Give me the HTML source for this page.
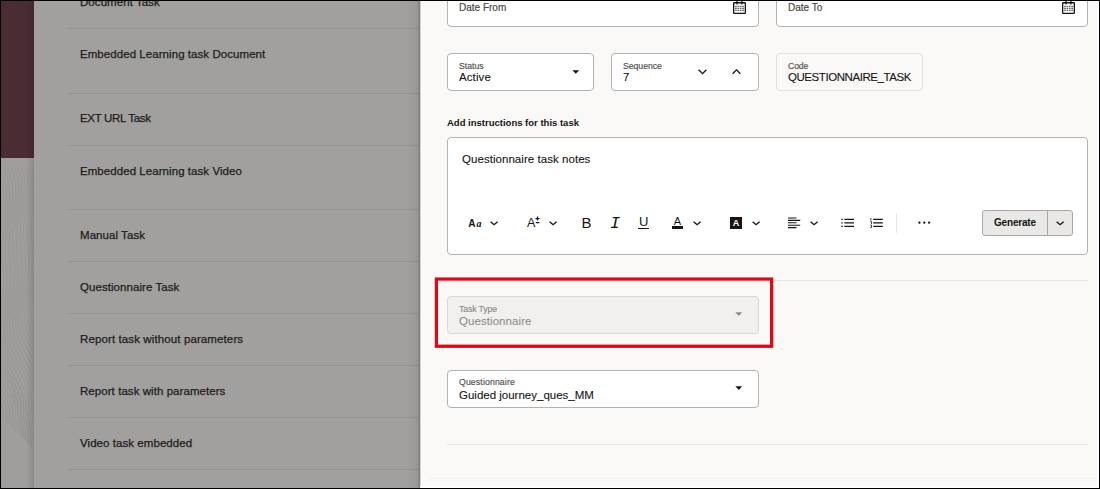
<!DOCTYPE html>
<html lang="en">
<head>
<meta charset="utf-8">
<title>Task Details</title>
<style>
*{box-sizing:border-box;margin:0;padding:0}
html,body{width:1100px;height:489px;overflow:hidden;background:#000}
body{position:relative;font-family:"Liberation Sans",sans-serif;color:#161513;font-size:12px}
.abs{position:absolute}
#frame{left:1px;top:1px;width:1098px;height:487px;background:#fff;overflow:hidden}
/* left strip */
#maroon{left:0;top:0;width:33px;height:157px;background:#4a2c33}
#strip{left:0;top:157px;width:33px;height:330px;background:#9f9e9c;overflow:hidden}
#stripshade{left:25px;top:0;width:8px;height:487px;background:linear-gradient(90deg,rgba(0,0,0,0),rgba(0,0,0,.12))}
/* list panel */
#list{left:33px;top:0;width:386px;height:487px;background:#a1a09e}
#listshade{left:404px;top:0;width:15px;height:487px;background:linear-gradient(90deg,rgba(40,38,36,0) 0,rgba(40,38,36,.03) 50%,rgba(40,38,36,.07) 80%,rgba(40,38,36,.16) 90%,rgba(40,38,36,.30) 100%)}
.sep{position:absolute;left:67px;width:352px;height:1px;background:#969593}
.item{position:absolute;left:79px;font-size:11.5px;letter-spacing:.06px;line-height:14px;white-space:nowrap;color:#1d1c1a;-webkit-text-stroke:.25px #1d1c1a}
/* drawer */
#drawer{left:419px;top:0;width:677px;height:485px;background:#faf9f8;border-left:1px solid #cfcecd;box-shadow:inset 1px 0 0 #fff}
.field{position:absolute;background:#fff;border:1px solid #b3b2b0;border-radius:4px}
.field.ro{background:#faf9f8;border-color:#e2e1df}
.field.dis{background:#f1f0ee;border-color:#d9d8d6}
.lab{position:absolute;left:11px;font-size:8.7px;line-height:10px;color:#504e4b;white-space:nowrap;letter-spacing:0;-webkit-text-stroke:.15px currentColor}
.val{position:absolute;left:11px;font-size:11.5px;line-height:14px;white-space:nowrap;letter-spacing:0;-webkit-text-stroke:.1px currentColor}
.hline{position:absolute;height:1px;background:#e7e6e4}
svg{position:absolute;overflow:visible}
</style>
</head>
<body>
<div id="frame" class="abs">

  <!-- left navigation strip -->
  <div id="maroon" class="abs"></div>
  <div id="strip" class="abs"><svg style="left:0;top:0;clip-path:polygon(0 0,33px 0,33px 292px,0 258px)" width="33" height="330" viewBox="0 0 33 330"><path d="M-13.5 10 L-10.8 16 L-8.2 22 L-6.1 28 L-4.6 34 L-3.9 40 L-4.0 46 L-4.9 52 L-6.6 58 L-8.8 64 L-11.3 70 L-14.0 76 L-16.5 82 L-18.6 88 L-20.3 94 L-21.3 100 L-21.8 106 L-21.6 112 L-21.1 118 L-20.3 124 L-19.3 130 L-18.5 136 L-18.0 142 L-17.8 148 L-18.0 154 L-18.6 160 L-19.4 166 L-20.4 172 L-21.3 178 L-21.9 184 L-22.0 190 L-21.5 196 L-20.4 202 L-18.5 208 L-16.0 214 L-13.1 220 L-9.8 226 L-6.5 232 L-3.4 238 L-0.7 244 L1.3 250 L2.6 256 L3.0 262 L2.7 268 L1.7 274 L0.2 280 L-1.6 286 L-3.5 292 L-5.3 298 M-9.6 10 L-6.8 16 L-4.3 22 L-2.4 28 L-1.1 34 L-0.6 40 L-1.0 46 L-2.2 52 L-4.0 58 L-6.3 64 L-8.9 70 L-11.4 76 L-13.8 82 L-15.7 88 L-17.1 94 L-17.9 100 L-18.1 106 L-17.8 112 L-17.1 118 L-16.3 124 L-15.5 130 L-14.9 136 L-14.6 142 L-14.6 148 L-15.1 154 L-15.9 160 L-16.9 166 L-17.9 172 L-18.8 178 L-19.3 184 L-19.2 190 L-18.5 196 L-17.1 202 L-15.0 208 L-12.3 214 L-9.2 220 L-5.9 226 L-2.6 232 L0.4 238 L2.9 244 L4.7 250 L5.7 256 L5.9 262 L5.4 268 L4.3 274 L2.7 280 L0.9 286 L-0.9 292 L-2.5 298 M-5.7 10 L-2.9 16 L-0.5 22 L1.3 28 L2.3 34 L2.5 40 L1.9 46 L0.5 52 L-1.5 58 L-3.9 64 L-6.4 70 L-8.8 76 L-11.0 82 L-12.7 88 L-13.8 94 L-14.3 100 L-14.3 106 L-13.9 112 L-13.2 118 L-12.4 124 L-11.7 130 L-11.3 136 L-11.2 142 L-11.6 148 L-12.3 154 L-13.3 160 L-14.4 166 L-15.5 172 L-16.3 178 L-16.7 184 L-16.4 190 L-15.4 196 L-13.8 202 L-11.4 208 L-8.5 214 L-5.3 220 L-1.9 226 L1.3 232 L4.2 238 L6.4 244 L8.0 250 L8.7 256 L8.7 262 L8.0 268 L6.7 274 L5.1 280 L3.4 286 L1.8 292 L0.4 298 M-1.7 10 L1.0 16 L3.2 22 L4.8 28 L5.6 34 L5.5 40 L4.6 46 L3.1 52 L1.0 58 L-1.4 64 L-3.9 70 L-6.2 76 L-8.1 82 L-9.5 88 L-10.4 94 L-10.7 100 L-10.5 106 L-10.0 112 L-9.2 118 L-8.5 124 L-8.0 130 L-7.8 136 L-8.0 142 L-8.6 148 L-9.6 154 L-10.7 160 L-11.9 166 L-13.0 172 L-13.7 178 L-13.9 184 L-13.5 190 L-12.2 196 L-10.3 202 L-7.7 208 L-4.7 214 L-1.3 220 L2.0 226 L5.2 232 L7.8 238 L9.9 244 L11.1 250 L11.6 256 L11.4 262 L10.5 268 L9.2 274 L7.6 280 L6.0 286 L4.5 292 L3.4 298 M2.2 10 L4.8 16 L6.9 22 L8.2 28 L8.7 34 L8.4 40 L7.3 46 L5.6 52 L3.4 58 L1.1 64 L-1.3 70 L-3.4 76 L-5.1 82 L-6.2 88 L-6.8 94 L-6.9 100 L-6.6 106 L-6.0 112 L-5.3 118 L-4.7 124 L-4.4 130 L-4.4 136 L-4.9 142 L-5.8 148 L-6.9 154 L-8.2 160 L-9.5 166 L-10.5 172 L-11.1 178 L-11.1 184 L-10.4 190 L-8.9 196 L-6.7 202 L-3.9 208 L-0.7 214 L2.6 220 L5.9 226 L8.9 232 L11.4 238 L13.2 244 L14.2 250 L14.4 256 L14.0 262 L13.0 268 L11.6 274 L10.1 280 L8.6 286 L7.4 292 L6.5 298 M6.1 10 L8.6 16 L10.4 22 L11.5 28 L11.8 34 L11.2 40 L9.9 46 L8.1 52 L5.9 58 L3.6 64 L1.4 70 L-0.5 76 L-2.0 82 L-2.9 88 L-3.2 94 L-3.1 100 L-2.7 106 L-2.1 112 L-1.4 118 L-1.0 124 L-0.9 130 L-1.2 136 L-1.9 142 L-3.0 148 L-4.3 154 L-5.7 160 L-7.0 166 L-8.0 172 L-8.4 178 L-8.2 184 L-7.2 190 L-5.5 196 L-3.1 202 L-0.1 208 L3.2 214 L6.6 220 L9.8 226 L12.6 232 L14.9 238 L16.4 244 L17.1 250 L17.2 256 L16.6 262 L15.5 268 L14.1 274 L12.7 280 L11.4 286 L10.4 292 L9.7 298 M10.0 10 L12.3 16 L13.9 22 L14.7 28 L14.7 34 L13.9 40 L12.5 46 L10.5 52 L8.3 58 L6.1 64 L4.1 70 L2.4 76 L1.3 82 L0.6 88 L0.5 94 L0.7 100 L1.3 106 L1.9 112 L2.4 118 L2.6 124 L2.5 130 L2.0 136 L1.0 142 L-0.3 148 L-1.8 154 L-3.3 160 L-4.6 166 L-5.4 172 L-5.7 178 L-5.2 184 L-3.9 190 L-2.0 196 L0.7 202 L3.8 208 L7.1 214 L10.5 220 L13.6 226 L16.2 232 L18.2 238 L19.5 244 L20.0 250 L19.8 256 L19.1 262 L17.9 268 L16.6 274 L15.3 280 L14.2 286 L13.4 292 L13.1 298 M13.8 10 L15.9 16 L17.2 22 L17.8 28 L17.5 34 L16.6 40 L15.0 46 L13.0 52 L10.8 58 L8.8 64 L6.9 70 L5.5 76 L4.6 82 L4.2 88 L4.3 94 L4.7 100 L5.2 106 L5.8 112 L6.1 118 L6.2 124 L5.8 130 L5.0 136 L3.8 142 L2.3 148 L0.7 154 L-0.8 160 L-2.0 166 L-2.8 172 L-2.8 178 L-2.1 184 L-0.6 190 L1.7 196 L4.5 202 L7.7 208 L11.1 214 L14.4 220 L17.3 226 L19.7 232 L21.5 238 L22.5 244 L22.7 250 L22.4 256 L21.5 262 L20.4 268 L19.1 274 L18.0 280 L17.1 286 L16.6 292 L16.5 298 M17.5 10 L19.4 16 L20.5 22 L20.8 28 L20.3 34 L19.1 40 L17.4 46 L15.4 52 L13.4 58 L11.5 64 L9.9 70 L8.7 76 L8.1 82 L7.9 88 L8.1 94 L8.6 100 L9.1 106 L9.6 112 L9.8 118 L9.6 124 L9.0 130 L7.9 136 L6.5 142 L4.8 148 L3.1 154 L1.6 160 L0.5 166 L-0.0 172 L0.2 178 L1.2 184 L2.9 190 L5.4 196 L8.4 202 L11.7 208 L15.0 214 L18.2 220 L20.9 226 L23.1 232 L24.6 238 L25.3 244 L25.4 250 L24.9 256 L24.0 262 L22.9 268 L21.7 274 L20.8 280 L20.1 286 L19.9 292 L20.1 298 M21.1 10 L22.8 16 L23.6 22 L23.7 28 L23.0 34 L21.6 40 L19.9 46 L17.9 52 L16.0 58 L14.3 64 L12.9 70 L12.0 76 L11.6 82 L11.6 88 L12.0 94 L12.5 100 L13.1 106 L13.4 112 L13.4 118 L13.0 124 L12.1 130 L10.7 136 L9.1 142 L7.3 148 L5.6 154 L4.1 160 L3.2 166 L2.8 172 L3.3 178 L4.5 184 L6.5 190 L9.2 196 L12.3 202 L15.6 208 L18.9 214 L21.9 220 L24.5 226 L26.4 232 L27.6 238 L28.1 244 L28.0 250 L27.4 256 L26.4 262 L25.4 268 L24.4 274 L23.7 280 L23.3 286 L23.3 292 L23.7 298 M24.6 10 L26.0 16 L26.6 22 L26.4 28 L25.5 34 L24.1 40 L22.3 46 L20.4 52 L18.7 58 L17.1 64 L16.0 70 L15.4 76 L15.3 82 L15.5 88 L15.9 94 L16.5 100 L16.9 106 L17.1 112 L16.9 118 L16.2 124 L15.0 130 L13.5 136 L11.7 142 L9.8 148 L8.0 154 L6.7 160 L5.9 166 L5.8 172 L6.5 178 L8.0 184 L10.2 190 L13.0 196 L16.2 202 L19.5 208 L22.7 214 L25.6 220 L27.9 226 L29.6 232 L30.5 238 L30.8 244 L30.5 250 L29.8 256 L28.9 262 L27.9 268 L27.1 274 L26.6 280 L26.5 286 L26.8 292 L27.4 298 M28.1 10 L29.2 16 L29.5 22 L29.1 28 L28.1 34 L26.6 40 L24.8 46 L23.0 52 L21.4 58 L20.1 64 L19.3 70 L18.9 76 L19.0 82 L19.3 88 L19.9 94 L20.4 100 L20.7 106 L20.7 112 L20.3 118 L19.3 124 L17.9 130 L16.1 136 L14.2 142 L12.2 148 L10.5 154 L9.3 160 L8.7 166 L8.8 172 L9.8 178 L11.5 184 L14.0 190 L16.9 196 L20.2 202 L23.4 208 L26.5 214 L29.2 220 L31.2 226 L32.6 232 L33.4 238 L33.4 244 L33.0 250 L32.3 256 L31.4 262 L30.6 268 L30.0 274 L29.7 280 L29.9 286 L30.4 292 L31.2 298 M31.4 10 L32.3 16 L32.3 22 L31.7 28 L30.6 34 L29.0 40 L27.3 46 L25.7 52 L24.3 58 L23.3 64 L22.7 70 L22.5 76 L22.8 82 L23.3 88 L23.8 94 L24.3 100 L24.5 106 L24.2 112 L23.5 118 L22.3 124 L20.7 130 L18.7 136 L16.7 142 L14.7 148 L13.1 154 L12.0 160 L11.6 166 L12.0 172 L13.2 178 L15.2 184 L17.8 190 L20.9 196 L24.1 202 L27.3 208 L30.2 214 L32.6 220 L34.5 226 L35.6 232 L36.1 238 L36.0 244 L35.5 250 L34.7 256 L34.0 262 L33.3 268 L33.0 274 L33.0 280 L33.4 286 L34.1 292 L35.1 298 M34.6 10 L35.2 16 L35.1 22 L34.3 28 L33.0 34 L31.5 40 L29.9 46 L28.4 52 L27.2 58 L26.5 64 L26.2 70 L26.2 76 L26.6 82 L27.2 88 L27.8 94 L28.1 100 L28.1 106 L27.7 112 L26.7 118 L25.2 124 L23.3 130 L21.2 136 L19.1 142 L17.2 148 L15.6 154 L14.7 160 L14.6 166 L15.3 172 L16.7 178 L18.9 184 L21.7 190 L24.8 196 L28.0 202 L31.1 208 L33.8 214 L36.0 220 L37.6 226 L38.4 232 L38.7 238 L38.5 244 L37.9 250 L37.2 256 L36.6 262 L36.1 268 L36.0 274 L36.3 280 L36.9 286 L37.9 292 L39.0 298 M37.7 10 L38.0 16 L37.7 22 L36.8 28 L35.5 34 L34.0 40 L32.5 46 L31.2 52 L30.3 58 L29.8 64 L29.7 70 L30.0 76 L30.6 82 L31.2 88 L31.7 94 L31.9 100 L31.7 106 L31.0 112 L29.7 118 L28.0 124 L25.9 130 L23.7 136 L21.6 142 L19.7 148 L18.3 154 L17.6 160 L17.7 166 L18.6 172 L20.4 178 L22.7 184 L25.6 190 L28.8 196 L31.9 202 L34.8 208 L37.3 214 L39.3 220 L40.5 226 L41.2 232 L41.3 238 L41.0 244 L40.4 250 L39.8 256 L39.3 262 L39.0 268 L39.2 274 L39.7 280 L40.6 286 L41.7 292 L42.9 298 M40.7 10 L40.8 16 L40.3 22 L39.3 28 L37.9 34 L36.5 40 L35.2 46 L34.1 52 L33.5 58 L33.2 64 L33.4 70 L33.9 76 L34.5 82 L35.1 88 L35.5 94 L35.6 100 L35.1 106 L34.1 112 L32.7 118 L30.7 124 L28.5 130 L26.2 136 L24.0 142 L22.2 148 L21.0 154 L20.6 160 L20.9 166 L22.1 172 L24.1 178 L26.6 184 L29.6 190 L32.7 196 L35.7 202 L38.5 208 L40.7 214 L42.4 220 L43.4 226 L43.9 232 L43.8 238 L43.4 244 L42.9 250 L42.4 256 L42.0 262 L42.1 268 L42.5 274 L43.3 280 L44.3 286 L45.6 292 L46.9 298 M43.5 10 L43.5 16 L42.8 22 L41.7 28 L40.4 34 L39.1 40 L38.0 46 L37.2 52 L36.8 58 L36.8 64 L37.2 70 L37.8 76 L38.4 82 L39.0 88 L39.3 94 L39.1 100 L38.5 106 L37.2 112 L35.5 118 L33.3 124 L31.0 130 L28.6 136 L26.5 142 L24.9 148 L23.9 154 L23.7 160 L24.3 166 L25.7 172 L27.9 178 L30.5 184 L33.5 190 L36.6 196 L39.5 202 L42.0 208 L44.0 214 L45.4 220 L46.2 226 L46.5 232 L46.3 238 L45.9 244 L45.4 250 L45.0 256 L44.9 262 L45.2 268 L45.9 274 L46.9 280 L48.2 286 L49.5 292 L50.8 298 M46.3 10 L46.0 16 L45.3 22 L44.2 28 L42.9 34 L41.8 40 L40.9 46 L40.3 52 L40.2 58 L40.4 64 L41.0 70 L41.7 76 L42.4 82 L42.9 88 L43.0 94 L42.6 100 L41.7 106 L40.2 112 L38.2 118 L35.9 124 L33.5 130 L31.1 136 L29.1 142 L27.6 148 L26.8 154 L26.9 160 L27.7 166 L29.4 172 L31.7 178 L34.5 184 L37.5 190 L40.4 196 L43.2 202 L45.5 208 L47.2 214 L48.3 220 L48.9 226 L49.0 232 L48.8 238 L48.3 244 L48.0 250 L47.8 256 L47.9 262 L48.4 268 L49.4 274 L50.6 280 L52.0 286 L53.5 292 L54.7 298 M49.0 10 L48.6 16 L47.7 22 L46.6 28 L45.5 34 L44.5 40 L43.9 46 L43.6 52 L43.7 58 L44.2 64 L44.9 70 L45.6 76 L46.3 82 L46.7 88 L46.6 94 L46.0 100 L44.8 106 L43.1 112 L40.9 118 L38.4 124 L35.9 130 L33.6 136 L31.7 142 L30.4 148 L29.9 154 L30.2 160 L31.3 166 L33.2 172 L35.6 178 L38.4 184 L41.4 190 L44.2 196 L46.7 202 L48.8 208 L50.3 214 L51.2 220 L51.5 226 L51.5 232 L51.2 238 L50.8 244 L50.6 250 L50.6 256 L51.0 262 L51.8 268 L53.0 274 L54.4 280 L56.0 286 L57.4 292 L58.6 298 M51.6 10 L51.1 16 L50.2 22 L49.1 28 L48.1 34 L47.4 40 L47.0 46 L46.9 52 L47.3 58 L48.0 64 L48.8 70 L49.6 76 L50.2 82 L50.4 88 L50.2 94 L49.3 100 L47.8 106 L45.8 112 L43.5 118 L40.9 124 L38.4 130 L36.1 136 L34.3 142 L33.3 148 L33.0 154 L33.6 160 L34.9 166 L37.0 172 L39.5 178 L42.4 184 L45.2 190 L47.9 196 L50.2 202 L52.0 208 L53.2 214 L53.9 220 L54.1 226 L54.0 232 L53.7 238 L53.4 244 L53.3 250 L53.6 256 L54.2 262 L55.3 268 L56.7 274 L58.3 280 L59.9 286 L61.4 292 L62.5 298 M12.2 243.4 C17.0 243.4 19.0 268.0 22.4 284.0 M10.4 236.8 C20.0 236.8 22.0 274.0 24.8 293.0 M8.6 230.2 C23.0 230.2 25.0 280.0 27.2 302.0 M6.8 223.6 C26.0 223.6 28.0 286.0 29.6 311.0 M5.0 217.0 C29.0 217.0 31.0 292.0 32.0 320.0" fill="none" stroke="#000" stroke-opacity=".055" stroke-width=".8"/></svg></div>
  <div id="stripshade" class="abs"></div>

  <!-- task list (under scrim) -->
  <div id="list" class="abs"></div>
  <div class="sep" style="top:27px"></div>
  <div class="sep" style="top:92px"></div>
  <div class="sep" style="top:144px"></div>
  <div class="sep" style="top:208px"></div>
  <div class="sep" style="top:260px"></div>
  <div class="sep" style="top:312px"></div>
  <div class="sep" style="top:364px"></div>
  <div class="sep" style="top:416px"></div>
  <div class="sep" style="top:468px"></div>
  <div class="item" style="top:-6px">Document Task</div>
  <div class="item" style="top:46px">Embedded Learning task Document</div>
  <div class="item" style="top:110px;letter-spacing:-.32px">EXT URL Task</div>
  <div class="item" style="top:163px">Embedded Learning task Video</div>
  <div class="item" style="top:227px">Manual Task</div>
  <div class="item" style="top:279px">Questionnaire Task</div>
  <div class="item" style="top:331px;letter-spacing:.113px">Report task without parameters</div>
  <div class="item" style="top:383px">Report task with parameters</div>
  <div class="item" style="top:435px">Video task embedded</div>
  <div id="listshade" class="abs"></div>

  <!-- drawer -->
  <div id="drawer" class="abs"></div>

  <!-- Date From (frame coords = page coords - 1) -->
  <div class="field" style="left:446px;top:-10px;width:312px;height:36px">
    <div class="val" style="top:9px;font-size:10px;color:#4b4946;letter-spacing:0;-webkit-text-stroke:.2px #4b4946">Date From</div>
    <svg style="left:284.9px;top:8px" width="14" height="15" viewBox="0 0 14 15"><rect x="0.65" y="2.75" width="11.7" height="10.6" rx=".6" fill="none" stroke="#161513" stroke-width="1.3"/><path d="M4 0v4.6M8.9 0v4.6" stroke="#161513" stroke-width="1.3" fill="none"/><g fill="#6a6866"><rect x="2.10" y="5.80" width="1.7" height="1.3"/><rect x="4.50" y="5.80" width="1.7" height="1.3"/><rect x="6.90" y="5.80" width="1.7" height="1.3"/><rect x="9.30" y="5.80" width="1.7" height="1.3"/><rect x="2.10" y="7.75" width="1.7" height="1.3"/><rect x="4.50" y="7.75" width="1.7" height="1.3"/><rect x="6.90" y="7.75" width="1.7" height="1.3"/><rect x="9.30" y="7.75" width="1.7" height="1.3"/><rect x="2.10" y="9.70" width="1.7" height="1.3"/><rect x="4.50" y="9.70" width="1.7" height="1.3"/><rect x="6.90" y="9.70" width="1.7" height="1.3"/><rect x="9.30" y="9.70" width="1.7" height="1.3"/></g></svg>
  </div>
  <!-- Date To -->
  <div class="field" style="left:775px;top:-10px;width:312px;height:36px">
    <div class="val" style="top:9px;font-size:10px;color:#4b4946;letter-spacing:0;-webkit-text-stroke:.2px #4b4946">Date To</div>
    <svg style="left:284.9px;top:8px" width="14" height="15" viewBox="0 0 14 15"><rect x="0.65" y="2.75" width="11.7" height="10.6" rx=".6" fill="none" stroke="#161513" stroke-width="1.3"/><path d="M4 0v4.6M8.9 0v4.6" stroke="#161513" stroke-width="1.3" fill="none"/><g fill="#6a6866"><rect x="2.10" y="5.80" width="1.7" height="1.3"/><rect x="4.50" y="5.80" width="1.7" height="1.3"/><rect x="6.90" y="5.80" width="1.7" height="1.3"/><rect x="9.30" y="5.80" width="1.7" height="1.3"/><rect x="2.10" y="7.75" width="1.7" height="1.3"/><rect x="4.50" y="7.75" width="1.7" height="1.3"/><rect x="6.90" y="7.75" width="1.7" height="1.3"/><rect x="9.30" y="7.75" width="1.7" height="1.3"/><rect x="2.10" y="9.70" width="1.7" height="1.3"/><rect x="4.50" y="9.70" width="1.7" height="1.3"/><rect x="6.90" y="9.70" width="1.7" height="1.3"/><rect x="9.30" y="9.70" width="1.7" height="1.3"/></g></svg>
  </div>

  <!-- Status -->
  <div class="field" style="left:446px;top:52px;width:147px;height:38px">
    <div class="lab" style="top:7px">Status</div>
    <div class="val" style="top:16px;letter-spacing:.1px">Active</div>
    <svg style="left:123.5px;top:15.6px" width="8" height="5" viewBox="0 0 8 5"><path d="M0.4 0.3h6.8L3.8 3.8z" fill="#161513"/></svg>
  </div>
  <!-- Sequence -->
  <div class="field" style="left:610px;top:52px;width:148px;height:38px">
    <div class="lab" style="top:7px;letter-spacing:-.03px">Sequence</div>
    <div class="val" style="top:16px">7</div>
    <svg style="left:86.06px;top:14.56px" width="9" height="6" viewBox="0 0 9 6"><path d="M0.6 0.7L4.5 4.6L8.4 0.7" fill="none" stroke="#161513" stroke-width="1.3"/></svg>
    <svg style="left:120.16px;top:14.8px" width="9" height="6" viewBox="0 0 9 6"><path d="M0.6 4.8L4.5 0.9L8.4 4.8" fill="none" stroke="#161513" stroke-width="1.3"/></svg>
  </div>
  <!-- Code -->
  <div class="field ro" style="left:775px;top:52px;width:147px;height:38px">
    <div class="lab" style="top:7px;letter-spacing:-.12px">Code</div>
    <div class="val" style="top:16px;letter-spacing:-.44px">QUESTIONNAIRE_TASK</div>
  </div>

  <div class="abs" style="left:446px;top:116px;font-size:9.5px;font-weight:700;line-height:12px;letter-spacing:0;white-space:nowrap">Add instructions for this task</div>

  <!-- rich text editor -->
  <div id="editor" class="field" style="left:446px;top:136px;width:641px;height:118px">
    <div class="val" style="left:14px;top:14px;letter-spacing:.05px">Questionnaire task notes</div>
  </div>
  <!-- toolbar (frame coords) -->
  <div id="tb" class="abs" style="left:0;top:0;width:0;height:0">
    <!-- Aa -->
    <div class="abs" style="left:467.3px;top:217px;font-size:10px;font-weight:700;line-height:12px;letter-spacing:0">A</div>
    <div class="abs" style="left:475.5px;top:217px;font-family:'Liberation Serif',serif;font-style:italic;font-weight:700;font-size:10px;line-height:12px">a</div>
    <svg style="left:489.4px;top:219.5px" width="9" height="6" viewBox="0 0 9 6"><path d="M0.6 0.7L4.1 3.7L7.6 0.7" fill="none" stroke="#161513" stroke-width="1.4"/></svg>
    <!-- A± -->
    <div class="abs" style="left:526px;top:215.4px;font-size:12.5px;line-height:14px">A</div>
    <svg style="left:534px;top:215px" width="6" height="9" viewBox="0 0 6 9"><path d="M0.5 2.6h4M2.5 0.6v4M0.8 6.6h3.6" stroke="#161513" stroke-width="1.2" fill="none"/></svg>
    <svg style="left:547.9px;top:219.5px" width="9" height="6" viewBox="0 0 9 6"><path d="M0.6 0.7L4.1 3.7L7.6 0.7" fill="none" stroke="#161513" stroke-width="1.4"/></svg>
    <!-- B I U -->
    <div class="abs" style="left:580.4px;top:213.5px;font-size:15px;line-height:16px">B</div>
    <div class="abs" style="left:609px;top:215px;font-family:'Liberation Mono',monospace;font-style:italic;font-size:17px;line-height:16px">I</div>
    <div class="abs" style="left:637.3px;top:214px;font-size:13px;line-height:14px;width:11px;text-align:center;border-bottom:1.3px solid #161513;height:14px">U</div>
    <!-- text colour -->
    <div class="abs" style="left:671px;top:214px;font-size:11px;line-height:12px;width:11px;text-align:center">A</div>
    <div class="abs" style="left:671px;top:225.3px;width:11px;height:2.3px;background:#161513"></div>
    <svg style="left:692.1px;top:219.5px" width="9" height="6" viewBox="0 0 9 6"><path d="M0.6 0.7L4.1 3.7L7.6 0.7" fill="none" stroke="#161513" stroke-width="1.4"/></svg>
    <!-- highlight colour -->
    <div class="abs" style="left:729px;top:216px;width:12px;height:12px;background:#161513;color:#fff;font-size:9px;font-weight:700;line-height:12.5px;text-align:center">A</div>
    <svg style="left:750.7px;top:219.5px" width="9" height="6" viewBox="0 0 9 6"><path d="M0.6 0.7L4.1 3.7L7.6 0.7" fill="none" stroke="#161513" stroke-width="1.4"/></svg>
    <!-- align -->
    <svg style="left:787px;top:216px" width="13" height="12" viewBox="0 0 13 12"><path d="M0 1h8.5M0 3.4h12.2M0 5.8h8.5M0 8.2h12.2M0 10.6h8.5" stroke="#161513" stroke-width="1.1" fill="none"/></svg>
    <svg style="left:809.1px;top:219.5px" width="9" height="6" viewBox="0 0 9 6"><path d="M0.6 0.7L4.1 3.7L7.6 0.7" fill="none" stroke="#161513" stroke-width="1.4"/></svg>
    <!-- bullet list -->
    <svg style="left:840px;top:217px" width="14" height="10" viewBox="0 0 14 10"><path d="M3.4 1.3h9.6M3.4 4.8h9.6M3.4 8.3h9.6" stroke="#161513" stroke-width="1.3" fill="none"/><path d="M0.4 1.3h1.4M0.4 4.8h1.4M0.4 8.3h1.4" stroke="#161513" stroke-width="1.3" fill="none"/></svg>
    <!-- numbered list -->
    <svg style="left:869px;top:217px" width="14" height="10" viewBox="0 0 14 10"><path d="M3.2 1.3h9.6M3.2 4.8h9.6M3.2 8.3h9.6" stroke="#161513" stroke-width="1.3" fill="none"/><path d="M0.9 0v2.6M0.3 3.6h1.2v2.4M0.3 7h1.2v2.6H0.3" stroke="#161513" stroke-width=".8" fill="none"/></svg>
    <div class="abs" style="left:895px;top:212px;width:1px;height:20px;background:#e8e7e5"></div>
    <!-- more -->
    <svg style="left:917px;top:220px" width="14" height="4" viewBox="0 0 14 4"><circle cx="1.4" cy="1.7" r="1.15" fill="#161513"/><circle cx="6.3" cy="1.7" r="1.15" fill="#161513"/><circle cx="11.1" cy="1.7" r="1.15" fill="#161513"/></svg>
    <!-- Generate split button -->
    <div class="abs" style="left:981px;top:209px;width:91px;height:26px;background:#e9e8e6;border:1px solid #a9a8a6;border-radius:3px"></div>
    <div class="abs" style="left:1046px;top:210px;width:1px;height:24px;background:#a9a8a6"></div>
    <div class="abs" style="left:993px;top:216px;font-size:10px;font-weight:700;line-height:12px;letter-spacing:-.19px;white-space:nowrap">Generate</div>
    <svg style="left:1055px;top:219.5px" width="9" height="6" viewBox="0 0 9 6"><path d="M0.6 0.7L4.1 3.7L7.6 0.7" fill="none" stroke="#161513" stroke-width="1.4"/></svg>
  </div>

  <!-- lower section -->
  <div class="hline" style="left:446px;top:279px;width:641px"></div>
  <div class="field dis" style="left:446px;top:295px;width:312px;height:38px">
    <div class="lab" style="top:7px;color:#8d8b88;letter-spacing:-.11px">Task Type</div>
    <div class="val" style="top:17px;color:#908e8b;letter-spacing:.07px">Questionnaire</div>
    <svg style="left:287.4px;top:15px" width="8" height="5" viewBox="0 0 8 5"><path d="M0.4 0.3h6.8L3.8 3.9z" fill="#8d8b88"/></svg>
  </div>
  <svg style="left:0;top:0" width="1098" height="487"><rect x="435.4" y="278.05" width="335.2" height="67.2" fill="none" stroke="#fff" stroke-opacity=".85" stroke-width="5.8"/><rect x="435.4" y="278.05" width="335.2" height="67.2" fill="none" stroke="#e7060f" stroke-width="3.25"/></svg>
  <div class="field" style="left:446px;top:369px;width:312px;height:38px">
    <div class="lab" style="top:6px;letter-spacing:.14px">Questionnaire</div>
    <div class="val" style="top:17px;letter-spacing:0">Guided journey_ques_MM</div>
    <svg style="left:287.4px;top:15px" width="8" height="5" viewBox="0 0 8 5"><path d="M0.4 0.3h6.8L3.8 3.9z" fill="#161513"/></svg>
  </div>
  <div class="hline" style="left:446px;top:443px;width:641px"></div>
  <div class="hline" style="left:428px;top:477px;width:667px;background:#f3f2f0"></div>

</div>
</body>
</html>
